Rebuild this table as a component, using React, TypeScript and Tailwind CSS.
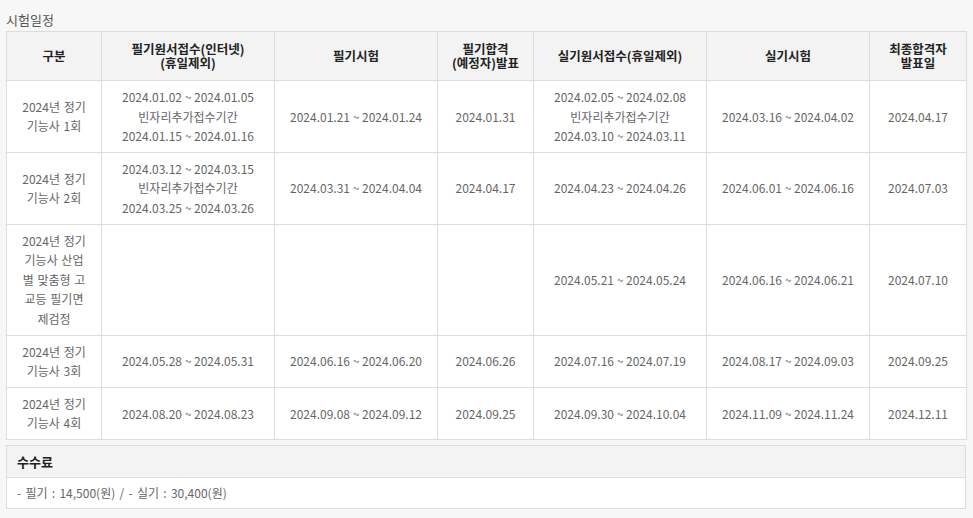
import React from "react";

const font = { fontFamily: '"Noto Sans CJK KR", "Noto Sans", sans-serif' };

type Row = { name: React.ReactNode; c: React.ReactNode[] };

const rows: Row[] = [
  {
    name: "2024년 정기 기능사 1회",
    c: [
      <>2024.01.02 ~ 2024.01.05<br />빈자리추가접수기간<br />2024.01.15 ~ 2024.01.16</>,
      "2024.01.21 ~ 2024.01.24",
      "2024.01.31",
      <>2024.02.05 ~ 2024.02.08<br />빈자리추가접수기간<br />2024.03.10 ~ 2024.03.11</>,
      "2024.03.16 ~ 2024.04.02",
      "2024.04.17",
    ],
  },
  {
    name: "2024년 정기 기능사 2회",
    c: [
      <>2024.03.12 ~ 2024.03.15<br />빈자리추가접수기간<br />2024.03.25 ~ 2024.03.26</>,
      "2024.03.31 ~ 2024.04.04",
      "2024.04.17",
      "2024.04.23 ~ 2024.04.26",
      "2024.06.01 ~ 2024.06.16",
      "2024.07.03",
    ],
  },
  {
    name: (
      <>
        2024년 정기
        <br />
        기능사 산업
        <br />
        별 맞춤형 고
        <br />
        교등 필기면
        <br />
        제검정
      </>
    ),
    c: ["", "", "", "2024.05.21 ~ 2024.05.24", "2024.06.16 ~ 2024.06.21", "2024.07.10"],
  },
  {
    name: "2024년 정기 기능사 3회",
    c: [
      "2024.05.28 ~ 2024.05.31",
      "2024.06.16 ~ 2024.06.20",
      "2024.06.26",
      "2024.07.16 ~ 2024.07.19",
      "2024.08.17 ~ 2024.09.03",
      "2024.09.25",
    ],
  },
  {
    name: "2024년 정기 기능사 4회",
    c: [
      "2024.08.20 ~ 2024.08.23",
      "2024.09.08 ~ 2024.09.12",
      "2024.09.25",
      "2024.09.30 ~ 2024.10.04",
      "2024.11.09 ~ 2024.11.24",
      "2024.12.11",
    ],
  },
];

const headers: React.ReactNode[] = [
  "구분",
  <>필기원서접수(인터넷)<br />(휴일제외)</>,
  "필기시험",
  <>필기합격<br />(예정자)발표</>,
  "실기원서접수(휴일제외)",
  "실기시험",
  <>최종합격자<br />발표일</>,
];

const widths = [95, 173, 163, 96, 173, 163, 97];

export default function App() {
  return (
    <div className="min-h-screen bg-[#f7f7f7] pt-[11px]" style={font}>
      <h2 className="ml-[6px] text-[13px] leading-[17px] text-[#555] font-normal">시험일정</h2>
      <table className="ml-[6px] mt-[3px] w-[960px] table-fixed border-collapse bg-white text-[12px]">
        <colgroup>
          {widths.map((w, i) => (
            <col key={i} style={{ width: w }} />
          ))}
        </colgroup>
        <thead>
          <tr>
            {headers.map((h, i) => (
              <th
                key={i}
                className="border border-[#dddddd] bg-[#f3f3f3] px-[4px] py-[10px] text-center align-middle text-[12.5px] font-bold leading-[14px] text-[#222]"
              >
                {h}
              </th>
            ))}
          </tr>
        </thead>
        <tbody>
          {rows.map((r, ri) => (
            <tr key={ri}>
              <td className="border border-[#dddddd] px-[8px] py-[6px] text-center align-middle leading-[19.6px] text-[#666] [word-spacing:1px]">
                {r.name}
              </td>
              {r.c.map((c, ci) => (
                <td
                  key={ci}
                  className="border border-[#dddddd] px-[6px] py-[6px] text-center align-middle leading-[19.6px] text-[#666]"
                >
                  {c}
                </td>
              ))}
            </tr>
          ))}
        </tbody>
      </table>
      <div className="ml-[6px] mt-[5px] w-[960px] border border-[#dddddd] bg-white">
        <div className="flex h-[32px] items-center border-b border-[#dddddd] bg-[#f3f3f3] px-[10px] text-[13px] font-bold text-[#222]">
          수수료
        </div>
        <div className="flex h-[30px] items-center px-[10px] text-[12px] text-[#666] [word-spacing:1.6px]">
          - 필기 : 14,500(원) / - 실기 : 30,400(원)
        </div>
      </div>
    </div>
  );
}
